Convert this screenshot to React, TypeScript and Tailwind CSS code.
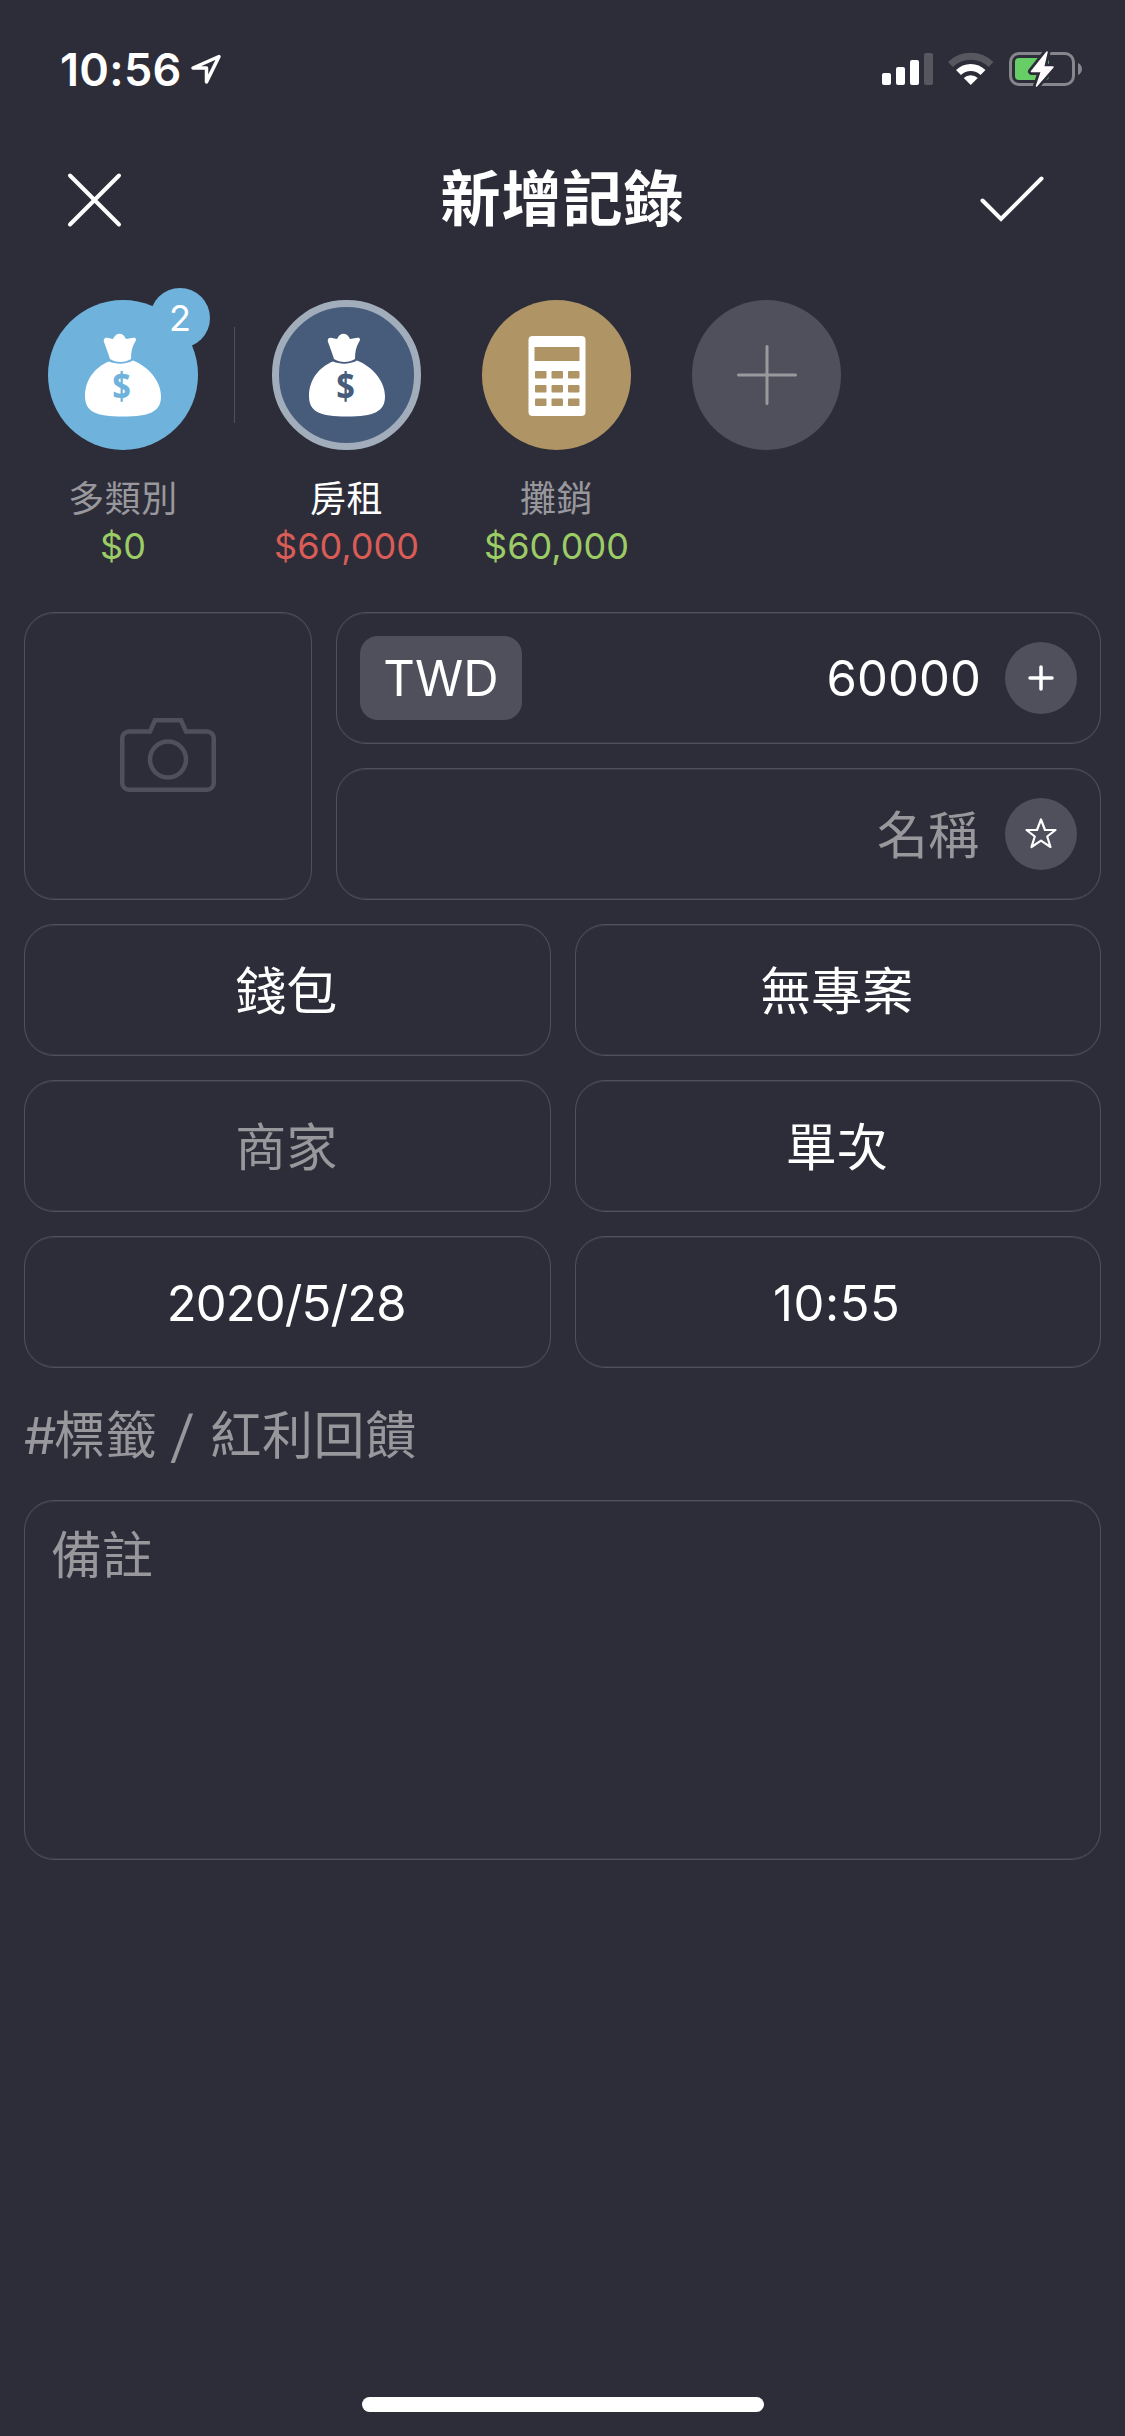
import type { ReactNode } from 'react';
import clsx from 'clsx';

type Category = {
  name: string;
  amount: string;
  amountColor: string;
  circle: string;
  icon: ReactNode;
  selected?: boolean;
};

const BOX = 'rounded-[30px] border border-[#504f5c] shadow-[inset_0_1px_0_#3c3b48,inset_0_-1px_0_#3c3b48]';

const CATEGORIES: Category[] = [
  { name: '房租', amount: '$60,000', amountColor: 'text-[#d95c56]', circle: 'w-[149px] bg-[#475b7b] border-[7px] border-[#a2adbc]', icon: <MoneyBag color="#475b7b" />, selected: true },
  { name: '攤銷', amount: '$60,000', amountColor: 'text-[#9ccc65]', circle: 'w-[149px] bg-[#af9465]', icon: <Calculator /> },
];

export default function App() {
  return (
    <div className="flex h-[2436px] w-[1125px] flex-col overflow-hidden bg-[#2d2d39] font-['Inter','Noto_Sans_CJK_TC',sans-serif] text-white">
      <StatusBar />
      <header className="flex h-[138px] items-center justify-between pr-[80px] pl-[67px]">
        <svg width="56" height="56" viewBox="0 0 56 56" fill="none" stroke="currentColor" strokeWidth="4" strokeLinecap="round">
          <path d="M3 3.500 52 52.500M52 3.500 3 52.500" />
        </svg>
        <h1 className="pb-[2px] pl-[23px] text-[60px] leading-none font-bold tracking-[1px]">新增記錄</h1>
        <svg width="66" height="48" viewBox="0 0 66 48" fill="none" stroke="currentColor" strokeWidth="4" strokeLinecap="round">
          <path d="M3.500 24.500 22 43 62.500 2.500" />
        </svg>
      </header>

      {/* Categories */}
      <section className="flex h-[343px] items-start pt-[31px] pl-[48px]">
        <CategoryItem
          className="w-[150px]"
          category={{ name: '多類別', amount: '$0', amountColor: 'text-[#9ccc65]', circle: 'w-[150px] bg-[#6fb3dc]', icon: <MoneyBag color="#6fb3dc" /> }}
          badge="2"
        />
        <div className="mt-[27px] mr-[6.500px] ml-[36px] h-[96px] w-px bg-[#4f4e5b]" />
        {CATEGORIES.map((c) => (
          <CategoryItem key={c.name} className="w-[210px]" category={c} />
        ))}
        <div className="flex w-[210px] justify-center">
          <div className="flex h-[150px] w-[149px] items-center justify-center rounded-full bg-[#504f5c]">
            <svg width="60" height="60" viewBox="0 0 60 60" stroke="#9a999e" strokeWidth="3" strokeLinecap="round">
              <path d="M30 1.500v57M1.500 30h57" />
            </svg>
          </div>
        </div>
      </section>

      {/* Form */}
      <main className="flex flex-col gap-6 px-6 text-[49px] leading-none">
        <div className="flex gap-6">
          <div className={clsx(BOX, 'flex size-[288px] items-center justify-center pb-[2px]')}>
            <Camera />
          </div>
          <div className="flex flex-1 flex-col gap-6">
            <div className={clsx(BOX, 'flex h-[132px] items-center px-[23px]')}>
              <div className="flex h-[84px] w-[162px] items-center justify-center rounded-[18px] bg-[#504f5c] pt-px">TWD</div>
              <span className="ml-auto pt-px tracking-[0.100px]">60000</span>
              <RoundButton>
                <path d="M36 25v22M25 36h22" strokeWidth="3.500" />
              </RoundButton>
            </div>
            <div className={clsx(BOX, 'flex h-[132px] items-center px-[23px]')}>
              <span className="ml-auto pt-[2px] pr-[2px] text-[51px] text-[#98979c]">名稱</span>
              <RoundButton>
                <path d="M36 21.500 40 32h10.500l-8.300 6.500 3.300 10.500-9.500-6.300-9.500 6.300 3.300-10.500L21.500 32H32z" strokeWidth="2.200" />
              </RoundButton>
            </div>
          </div>
        </div>

        <div className="grid grid-cols-2 gap-6">
          <Field>錢包</Field>
          <Field>無專案</Field>
          <Field placeholder>商家</Field>
          <Field>單次</Field>
          <Field numeric="tracking-[-0.900px]">2020/5/28</Field>
          <Field numeric="tracking-[0.600px]">10:55</Field>
        </div>

        <div className="flex h-[84px] items-center pt-[2px] text-[51px] tracking-[0.700px] whitespace-pre text-[#98979c]">
          <span className="-mr-[3px]">#</span>標籤 <span className="mr-[2px] -translate-y-[3px] scale-x-120 font-['Noto_Sans_CJK_TC']">/</span> 紅利回饋
        </div>
        <div className={clsx(BOX, 'h-[360px] px-[26px] pt-[29px] text-[51px] text-[#98979c]')}>備註</div>
      </main>

      <div className="mt-auto mb-6 h-[15px] w-[402px] self-center rounded-full bg-white" />
    </div>
  );
}

function StatusBar() {
  return (
    <div className="flex h-[131px] shrink-0 items-start pt-[52px] pr-[42px] pl-[60px]">
      <span className="mt-[-5px] text-[45px] leading-none font-semibold tracking-[0.300px]">10:56</span>
      <svg className="mt-[1px] ml-[8px]" width="32" height="32" viewBox="0 0 32 32" fill="none" stroke="currentColor" strokeWidth="3.500" strokeLinejoin="round">
        <path d="M29 3.500 3 15h13.500v14z" />
      </svg>
      <div className="ml-auto flex items-start gap-[15px]">
        <svg width="51" height="34" viewBox="0 0 51 34" fill="currentColor">
          <rect x="0" y="21" width="9" height="12" rx="2" />
          <rect x="14" y="15" width="9" height="18" rx="2" />
          <rect x="28" y="8" width="9" height="25" rx="2" />
          <rect x="42" y="1" width="9" height="32" rx="2" opacity=".2" />
        </svg>
        <svg width="46" height="34" viewBox="0 0 46 34" fill="none" stroke="currentColor" strokeWidth="7">
          <path d="M2.500 12.500a29 29 0 0 1 40.500 0" opacity=".2" />
          <path d="M10.500 20.500a17.500 17.500 0 0 1 24.500 0" />
          <path d="M22.750 33l-7-7a10 10 0 0 1 14 0z" fill="currentColor" stroke="none" />
        </svg>
        <Battery />
      </div>
    </div>
  );
}

function Battery() {
  return (
    <svg className="overflow-visible" width="74" height="36" viewBox="0 0 74 36">
      <rect x="1.500" y="1.500" width="63" height="31" rx="8.500" fill="none" stroke="#87868d" strokeWidth="3" />
      <path d="M69 11c5.300 2 5.300 10 0 12z" fill="#87868d" />
      <rect x="6" y="6" width="34" height="22" rx="4" fill="#67ce67" />
      <path d="M38 0 22.500 19.500h10L27.500 34 44 15H34.500z" fill="#2d2d39" stroke="#2d2d39" strokeWidth="7" strokeLinejoin="round" />
      <path d="M38 0 22.500 19.500h10L27.500 34 44 15H34.500z" fill="#fff" stroke="#fff" strokeWidth="1.500" strokeLinejoin="round" />
    </svg>
  );
}

function CategoryItem({ category: c, badge, className }: { category: Category; badge?: string; className?: string }) {
  return (
    <div className={clsx('flex flex-col items-center text-[36px] leading-none whitespace-nowrap', className)}>
      <div className={clsx('relative flex h-[150px] items-center justify-center rounded-full', c.circle)}>
        {c.icon}
        {badge && (
          <span className="absolute -top-[12px] -right-[12px] flex size-[60px] items-center justify-center rounded-full bg-[#6fb3dc]">{badge}</span>
        )}
      </div>
      <div className={clsx('mt-[31px] tracking-[0.500px]', !c.selected && 'text-[#98979c]')}>{c.name}</div>
      <div className={clsx('mt-[11px]', c.amountColor)}>{c.amount}</div>
    </div>
  );
}

// numeric fields carry their own tracking class
function Field({ children, placeholder, numeric }: { children: ReactNode; placeholder?: boolean; numeric?: string }) {
  return (
    <div className={clsx(BOX, 'flex h-[132px] items-center justify-center pt-[2px] pr-[2px]', placeholder && 'text-[#98979c]', numeric ? `text-[49px] ${numeric}` : 'text-[51px]')}>
      {children}
    </div>
  );
}

function RoundButton({ children }: { children: ReactNode }) {
  return (
    <svg className="ml-[24px]" width="72" height="72" viewBox="0 0 72 72" fill="none" stroke="currentColor" strokeLinecap="round" strokeLinejoin="round">
      <circle cx="36" cy="36" r="36" fill="#504f5c" stroke="none" />
      {children}
    </svg>
  );
}

function MoneyBag({ color }: { color: string }) {
  return (
    <svg className="shrink-0" width="78" height="84" viewBox="0 0 78 84" fill="#fff">
      <path d="M20 9c-1-3 1-5 4-4l5 1c3-7 10-7 13 0l6-1c4-1 5 1 3 4-3 5-4 10-4 17-6 4-15 4-21 0-2-6-4-12-6-17z" />
      <path d="M25 28.500c7 3 17 3 24-1 15 6 28 20 28 36 0 15-11 20-38 20S1 79 1 63C1 47 11 34 25 28.500z" />
      <text transform="translate(37.500 67) scale(.88 1)" textAnchor="middle" fill={color} className="font-['Open_Sans'] text-[37px] font-bold">$</text>
    </svg>
  );
}

function Calculator() {
  return (
    <svg className="mt-[2px]" width="58" height="80" viewBox="0 0 58 80" fill="#af9465">
      <rect x="0.500" width="57" height="80" rx="4" fill="#fff" />
      <rect x="6.500" y="11" width="45" height="14" />
      {[35, 49, 62.5].map((y) =>
        [7, 23.5, 40].map((x) => <rect key={`${x}-${y}`} x={x} y={y} width="11.500" height="7.500" rx="1" />),
      )}
    </svg>
  );
}

function Camera() {
  return (
    <svg width="96" height="74" viewBox="0 0 96 74" fill="none" stroke="#504f5c" strokeWidth="4.500">
      <path d="M9 13.500h21L35 2.250h26L66 13.500h21a6.750 6.750 0 0 1 6.750 6.750V65A6.750 6.750 0 0 1 87 71.750H9A6.750 6.750 0 0 1 2.250 65V20.250A6.750 6.750 0 0 1 9 13.500z" />
      <circle cx="48" cy="41.500" r="18" />
    </svg>
  );
}
